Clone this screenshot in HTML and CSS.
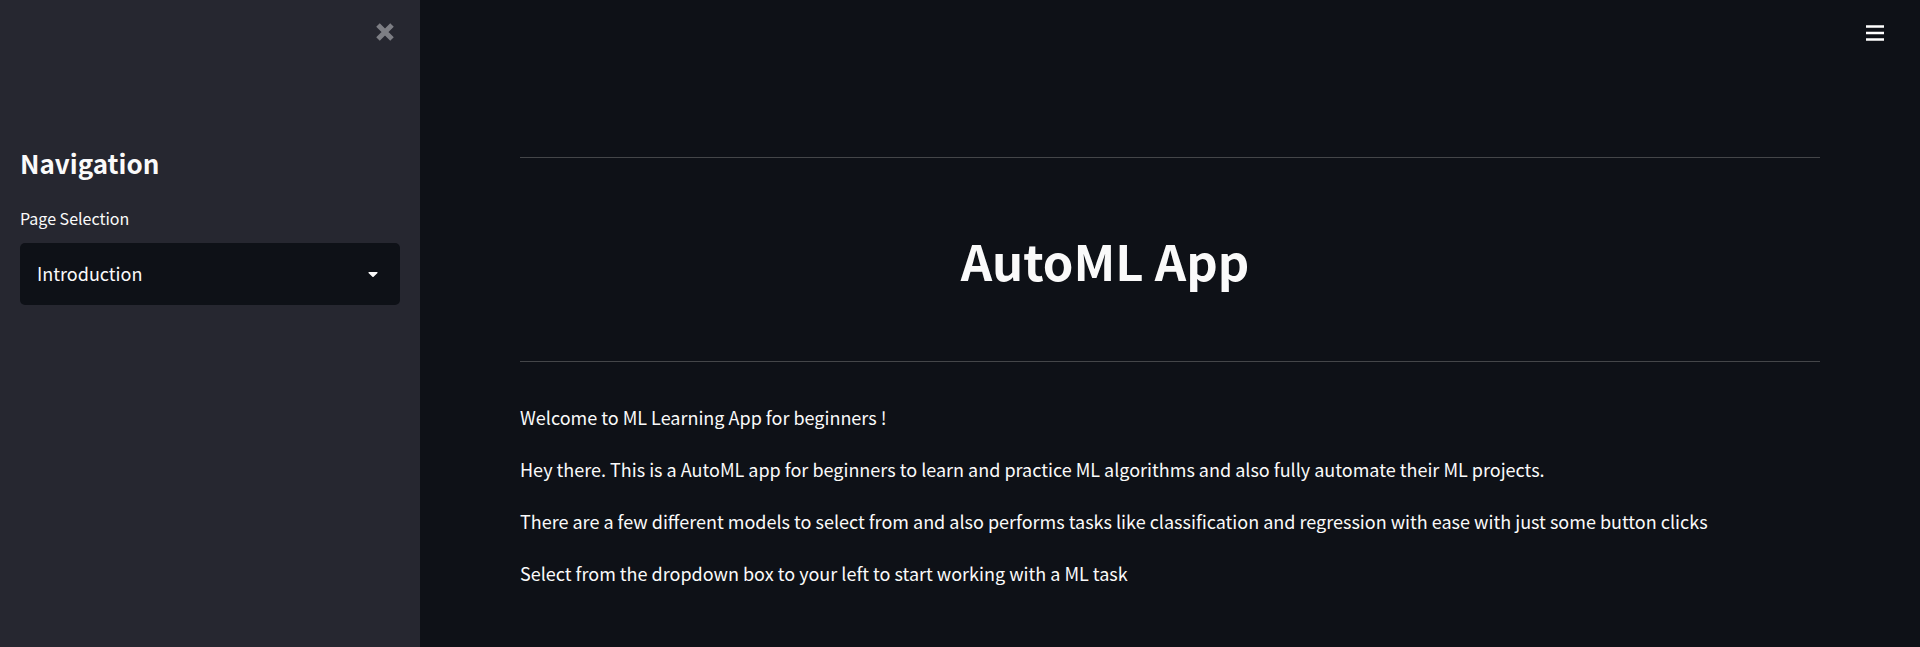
FILE: index.html
```html
<!DOCTYPE html>
<html lang="en">
<head>
<meta charset="utf-8">
<title>AutoML App</title>
<link rel="stylesheet" href="styles.css">
</head>
<body>
<div class="app">
  <aside class="sidebar">
    <div class="sidebar-top">
      <button class="icon-button close" type="button" aria-label="Close sidebar">
        <svg width="20" height="20" viewBox="0 0 20 20" fill="none" stroke="currentColor" stroke-width="5"><path d="M3 3l14 14M17 3L3 17"/></svg>
      </button>
    </div>
    <div class="sidebar-content">
      <h2 class="sidebar-title">Navigation</h2>
      <label class="field-label" for="page">Page Selection</label>
      <div class="select-wrap">
        <select class="select" id="page"><option>Introduction</option></select>
        <svg class="caret" width="10" height="6" viewBox="0 0 10 6" fill="currentColor"><path d="M1 0h8q1 .4.5 1L5.600 4.700q-.6.6-1.200 0L.5 1Q0 .4 1 0z"/></svg>
      </div>
    </div>
  </aside>
  <div class="page">
    <header class="toolbar">
      <button class="icon-button menu" type="button" aria-label="Main menu">
        <svg width="20" height="20" viewBox="0 0 20 20" fill="currentColor"><path d="M1 2.300h18v2.400H1zM1 8.800h18v2.400H1zM1 15.300h18v2.400H1z"/></svg>
      </button>
    </header>
    <main class="content">
      <hr class="rule">
      <div class="title-row"><h1 class="title">AutoML App</h1></div>
      <hr class="rule">
      <div class="intro">
        <p>Welcome to ML Learning App for beginners !</p>
        <p>Hey there. This is a AutoML app for beginners to learn and practice ML algorithms and also fully automate their ML projects.</p>
        <p>There are a few different models to select from and also performs tasks like classification and regression with ease with just some button clicks</p>
        <p>Select from the dropdown box to your left to start working with a ML task</p>
      </div>
    </main>
  </div>
</div>
</body>
</html>
```
FILE: styles.css
```css
* { box-sizing: border-box; }
body {
  margin: 0;
  background: #0e1117;
  color: #fafafa;
  font-family: "Noto Sans CJK SC", "Noto Sans", sans-serif;
  font-size: 18px;
  line-height: 32px;
}
h1, h2, p, hr { margin: 0; }
.app { display: flex; min-height: 100vh; }
.sidebar { flex: 0 0 420px; background: #262730; }
.sidebar-top { display: flex; justify-content: flex-end; padding: 22px 25px 0; }
.sidebar-content { padding: 103px 20px 0; }
.icon-button {
  display: flex;
  padding: 0;
  border: 0;
  background: none;
  color: inherit;
  cursor: pointer;
}
.close { color: #7d7e84; }
.menu { color: #fff; }
.sidebar-title { font-size: 26px; line-height: 36px; font-weight: 700; }
.field-label { display: block; margin: 25px 0 13px; font-size: 16px; line-height: 24px; }
.select-wrap { position: relative; }
.select {
  display: block;
  width: 100%;
  height: 62px;
  padding: 0 48px 2px 17px;
  border: 0;
  border-radius: 5px;
  appearance: none;
  background: #0e1117;
  color: inherit;
  font: inherit;
}
.caret { position: absolute; top: 29px; right: 22px; pointer-events: none; }
.page { flex: 1; min-width: 0; }
.toolbar { display: flex; justify-content: flex-end; padding: 23px 35px 0; }
.content { padding: 114px 100px 40px; }
.rule { height: 1px; border: 0; background: #444649; }
.title-row { padding: 69px 10% 68px 0; }
.title { font-size: 49px; line-height: 66px; font-weight: 700; text-align: center; }
.intro { display: grid; gap: 20px; padding-top: 39px; }
```
